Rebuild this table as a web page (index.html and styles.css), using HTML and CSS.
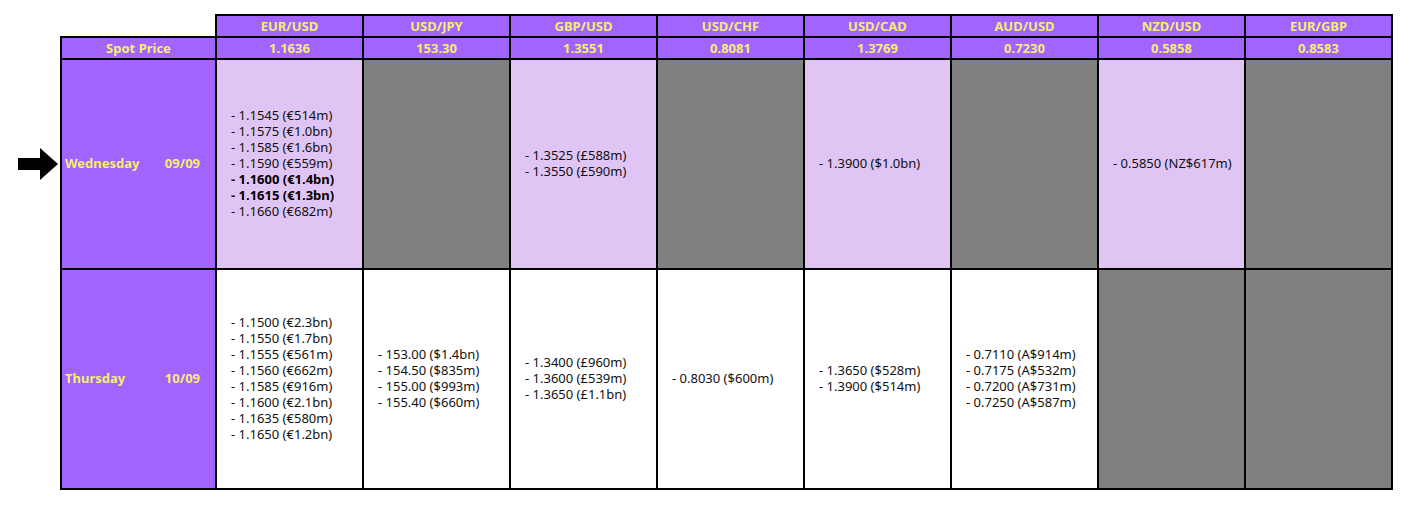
FILE: index.html
```html
<!DOCTYPE html>
<html>
<head>
<meta charset="utf-8">
<link rel="stylesheet" href="styles.css">
</head>
<body>
<table class="grid">
  <colgroup>
    <col class="col-label">
    <col class="col-pair"><col class="col-pair"><col class="col-pair"><col class="col-pair">
    <col class="col-pair"><col class="col-pair"><col class="col-pair"><col class="col-pair">
  </colgroup>
  <tr class="row-head">
    <td class="blank"></td>
    <td class="head">EUR/USD</td>
    <td class="head">USD/JPY</td>
    <td class="head">GBP/USD</td>
    <td class="head">USD/CHF</td>
    <td class="head">USD/CAD</td>
    <td class="head">AUD/USD</td>
    <td class="head">NZD/USD</td>
    <td class="head">EUR/GBP</td>
  </tr>
  <tr class="row-head">
    <td class="head">Spot Price</td>
    <td class="head">1.1636</td>
    <td class="head">153.30</td>
    <td class="head">1.3551</td>
    <td class="head">0.8081</td>
    <td class="head">1.3769</td>
    <td class="head">0.7230</td>
    <td class="head">0.5858</td>
    <td class="head">0.8583</td>
  </tr>
  <tr class="row-wed">
    <td class="day">
      <svg class="arrow" width="40" height="32" viewBox="0 0 40 32"><rect x="0" y="10" width="23" height="12" fill="#000"/><polygon points="22,0 40,16 22,32" fill="#000"/></svg>
      <div class="day-inner"><span>Wednesday</span><span>09/09</span></div>
    </td>
    <td class="cell lav">
      <div>- 1.1545 (€514m)</div>
      <div>- 1.1575 (€1.0bn)</div>
      <div>- 1.1585 (€1.6bn)</div>
      <div>- 1.1590 (€559m)</div>
      <div class="b">- 1.1600 (€1.4bn)</div>
      <div class="b">- 1.1615 (€1.3bn)</div>
      <div>- 1.1660 (€682m)</div>
    </td>
    <td class="cell gray"></td>
    <td class="cell lav">
      <div>- 1.3525 (£588m)</div>
      <div>- 1.3550 (£590m)</div>
    </td>
    <td class="cell gray"></td>
    <td class="cell lav">
      <div>- 1.3900 ($1.0bn)</div>
    </td>
    <td class="cell gray"></td>
    <td class="cell lav">
      <div>- 0.5850 (NZ$617m)</div>
    </td>
    <td class="cell gray"></td>
  </tr>
  <tr class="row-thu">
    <td class="day">
      <div class="day-inner"><span>Thursday</span><span>10/09</span></div>
    </td>
    <td class="cell">
      <div>- 1.1500 (€2.3bn)</div>
      <div>- 1.1550 (€1.7bn)</div>
      <div>- 1.1555 (€561m)</div>
      <div>- 1.1560 (€662m)</div>
      <div>- 1.1585 (€916m)</div>
      <div>- 1.1600 (€2.1bn)</div>
      <div>- 1.1635 (€580m)</div>
      <div>- 1.1650 (€1.2bn)</div>
    </td>
    <td class="cell">
      <div>- 153.00 ($1.4bn)</div>
      <div>- 154.50 ($835m)</div>
      <div>- 155.00 ($993m)</div>
      <div>- 155.40 ($660m)</div>
    </td>
    <td class="cell">
      <div>- 1.3400 (£960m)</div>
      <div>- 1.3600 (£539m)</div>
      <div>- 1.3650 (£1.1bn)</div>
    </td>
    <td class="cell">
      <div>- 0.8030 ($600m)</div>
    </td>
    <td class="cell">
      <div>- 1.3650 ($528m)</div>
      <div>- 1.3900 ($514m)</div>
    </td>
    <td class="cell">
      <div>- 0.7110 (A$914m)</div>
      <div>- 0.7175 (A$532m)</div>
      <div>- 0.7200 (A$731m)</div>
      <div>- 0.7250 (A$587m)</div>
    </td>
    <td class="cell gray"></td>
    <td class="cell gray"></td>
  </tr>
</table>
</body>
</html>
```

FILE: styles.css
```css
html, body {
  margin: 0;
  padding: 0;
  background: #ffffff;
}

body {
  padding: 14px 0 0 60px;
  font-family: "Noto Sans", "DejaVu Sans", sans-serif;
}

.grid {
  border-collapse: collapse;
  table-layout: fixed;
  width: 1333px;
}

.col-label { width: 155px; }
.col-pair { width: 147px; }

.grid td {
  border: 2px solid #000;
  padding: 0;
}

.grid td.blank {
  border-top: none;
  border-left: none;
  background: #fff;
}

.row-head td { height: 20px; }

.head {
  background: #a263ff;
  color: #f3ef6c;
  font-weight: 700;
  font-size: 13px;
  text-align: center;
  line-height: 15px;
}

.row-wed td { height: 206px; }
.row-thu td { height: 216px; }

.day {
  background: #a263ff;
  color: #f3ef6c;
  font-weight: 700;
  font-size: 13px;
  position: relative;
  vertical-align: middle;
}

.grid td.day { padding-bottom: 2px; }

.day-inner {
  display: flex;
  justify-content: space-between;
  padding: 0 15px 0 3px;
}

.arrow {
  position: absolute;
  left: -44px;
  top: 50%;
  margin-top: -16px;
}

.grid td.cell {
  vertical-align: middle;
  font-size: 13px;
  line-height: 16px;
  color: #111;
  padding: 0 0 2px 14px;
  background: #fff;
}

.grid td.cell.lav { background: #e0c4f4; }
.grid td.cell.gray { background: #808080; }

.b { font-weight: 700; color: #000; }
```
